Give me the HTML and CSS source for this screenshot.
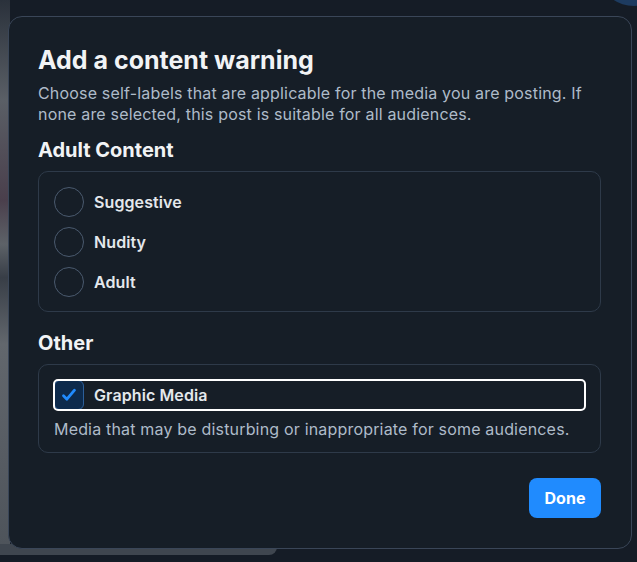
FILE: index.html
```html
<!DOCTYPE html>
<html lang="en">
<head>
    <meta charset="UTF-8">
    <meta name="viewport" content="width=device-width, initial-scale=1.0">
    <title>Add a content warning</title>
    <link rel="stylesheet" href="styles.css">
</head>
<body>
    <div class="backdrop-strip"></div>
    <div class="backdrop-bar"></div>
    <div class="backdrop-avatar"></div>
    <div class="dialog">
        <h1 class="title">Add a content warning</h1>
        <p class="lead">Choose self-labels that are applicable for the media you are posting. If none are selected, this post is suitable for all audiences.</p>

        <h2 class="section-title">Adult Content</h2>
        <div class="group">
            <label class="option"><span class="radio"></span>Suggestive</label>
            <label class="option"><span class="radio"></span>Nudity</label>
            <label class="option"><span class="radio"></span>Adult</label>
        </div>

        <h2 class="section-title other">Other</h2>
        <div class="group other-group">
            <label class="option focused">
                <span class="check">
                    <svg width="18" height="18" viewBox="0 0 18 18"><path d="M3.5 9.8l3.4 3.4L14.5 4.2" fill="none" stroke="#208bfe" stroke-width="2.8" stroke-linecap="round" stroke-linejoin="round"/></svg>
                </span>Graphic Media
            </label>
            <p class="hint">Media that may be disturbing or inappropriate for some audiences.</p>
        </div>

        <div class="actions">
            <button class="done">Done</button>
        </div>
    </div>
</body>
</html>
```

FILE: styles.css
```css
body{
    margin: 0;
    height: 562px;
    overflow: hidden;
    background-color: #151c26;
    font-family: Inter, "Noto Sans", sans-serif;
    color: #f1f3f5;
    padding: 16px 5px 0 8px;
    box-sizing: border-box;
}
.backdrop-strip{
    position: absolute;
    left: 0;
    top: 0;
    width: 10px;
    height: 555px;
    background: linear-gradient(180deg, #2a313b 0%, #5a5f66 18%, #4a3f4c 36%, #5d6268 44%, #383e47 50%, #62676d 62%, #575c63 82%, #4d535a 100%);
}
.backdrop-bar{
    position: absolute;
    left: 0;
    top: 544px;
    width: 277px;
    height: 11px;
    border-radius: 0 0 8px 0;
    background-color: #3f464f;
}
.backdrop-avatar{
    position: absolute;
    left: 604px;
    top: -40px;
    width: 60px;
    height: 46px;
    border-radius: 50%;
    background-color: #1d3b60;
}
.dialog{
    position: relative;
    width: 624px;
    height: 533px;
    box-sizing: border-box;
    padding: 25px 30px 0 29px;
    background-color: #161e27;
    border: 1px solid #3a4658;
    border-radius: 14px;
}
.title{
    margin: 0 0 5px 0;
    font-size: 25px;
    line-height: 36px;
    font-weight: 700;
}
.lead{
    margin: 0;
    font-size: 16px;
    line-height: 21px;
    letter-spacing: 0.18px;
    color: #aebbc9;
}
.section-title{
    margin: 12px 0 8px 0;
    font-size: 20px;
    line-height: 26px;
    font-weight: 700;
}
.section-title.other{
    margin-top: 18px;
}
.group{
    border: 1px solid #2e3a49;
    border-radius: 10px;
    padding: 15px 15px 14px 15px;
    display: flex;
    flex-direction: column;
    gap: 10px;
}
.other-group{
    padding-bottom: 12px;
    gap: 9px;
}
.option{
    display: flex;
    align-items: center;
    gap: 10px;
    font-size: 16px;
    font-weight: 600;
    letter-spacing: 0.1px;
    color: #e4e8ec;
}
.radio{
    width: 28px;
    height: 28px;
    border: 1px solid #4a5a6e;
    border-radius: 50%;
}
.option.focused{
    outline: 2px solid #ffffff;
    outline-offset: -1px;
    border-radius: 4px;
}
.check{
    width: 28px;
    height: 28px;
    border: 1px solid #2c5f9a;
    border-radius: 6px;
    background-color: #0d2a4c;
    display: flex;
    align-items: center;
    justify-content: center;
}
.hint{
    margin: 0;
    font-size: 16px;
    line-height: 21px;
    letter-spacing: 0.18px;
    color: #aebbc9;
}
.actions{
    display: flex;
    justify-content: flex-end;
    margin-top: 25px;
}
.done{
    width: 72px;
    height: 40px;
    border: none;
    border-radius: 8px;
    background-color: #208bfe;
    color: #ffffff;
    font-family: Inter, "Noto Sans", sans-serif;
    font-size: 16px;
    font-weight: 700;
}
```
